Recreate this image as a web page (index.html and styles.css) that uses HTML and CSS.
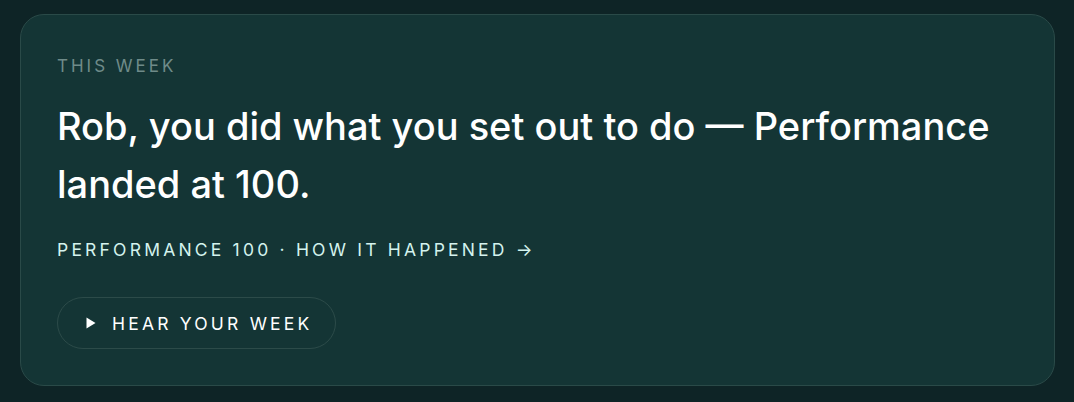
FILE: index.html
```html
<!DOCTYPE html>
<html>
<head>
<meta charset="utf-8">
<link rel="stylesheet" href="styles.css">
</head>
<body>
<div class="card">
  <div class="eyebrow">THIS WEEK</div>
  <h1 class="headline">Rob, you did what you set out to do — Performance landed at 100.</h1>
  <div class="meta">PERFORMANCE 100 · HOW IT HAPPENED →</div>
  <button class="hear">
    <svg class="play" width="10" height="12" viewBox="0 0 10 12"><path d="M0.5 0.5 L9.5 6 L0.5 11.5 Z" fill="#ffffff"/></svg>
    <span>HEAR YOUR WEEK</span>
  </button>
</div>
</body>
</html>
```
FILE: styles.css
```css
html, body {
  margin: 0;
  padding: 0;
  background: #0e2426;
}
body {
  padding: 14px 19px 16px 20px;
  font-family: Inter, "Noto Sans", sans-serif;
}
.card {
  box-sizing: border-box;
  height: 372px;
  background: #143535;
  border: 1px solid #2a4a48;
  border-radius: 24px;
  padding: 41px 36px 0 36px;
  display: flex;
  flex-direction: column;
  align-items: flex-start;
}
.eyebrow {
  font-size: 17px;
  letter-spacing: 3px;
  color: #6f8b89;
  line-height: 20px;
}
.headline {
  margin: 21px 0 0 0;
  font-size: 38px;
  font-weight: 500;
  letter-spacing: 0;
  line-height: 58px;
  color: #ffffff;
}
.meta {
  margin-top: 27px;
  font-size: 17.5px;
  letter-spacing: 3.2px;
  color: #d4f3ee;
  line-height: 20px;
}
.hear {
  margin-top: 37px;
  box-sizing: border-box;
  height: 52px;
  padding: 0 22px 0 28px;
  border: 1px solid #2c4b49;
  border-radius: 26px;
  background: transparent;
  display: flex;
  align-items: center;
  gap: 16px;
  font-family: inherit;
  font-size: 17.5px;
  letter-spacing: 3.2px;
  color: #ffffff;
}
.play { display: block; }
```
